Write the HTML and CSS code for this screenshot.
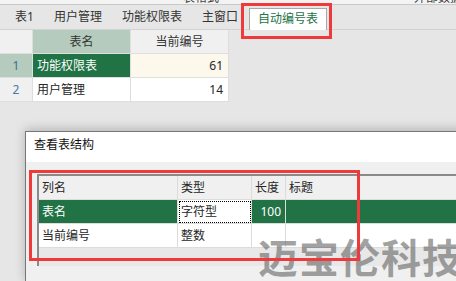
FILE: index.html
```html
<!DOCTYPE html>
<html lang="zh-CN">
<head>
    <meta charset="UTF-8">
    <title>自动编号表</title>
    <link rel="stylesheet" href="styles.css">
</head>
<body>
    <div class="title-strip">
        <span class="title-left">表格式</span>
        <span class="title-right">外部数据</span>
    </div>

    <div class="tab-bar">
        <div class="tab">表1</div>
        <div class="tab">用户管理</div>
        <div class="tab">功能权限表</div>
        <div class="tab">主窗口</div>
        <div class="tab active">自动编号表</div>
    </div>

    <div class="sheet">
        <div class="cell corner"></div>
        <div class="cell head sel-head">表名</div>
        <div class="cell head">当前编号</div>

        <div class="cell row-no sel-head">1</div>
        <div class="cell picked">功能权限表</div>
        <div class="cell num cream">61</div>

        <div class="cell row-no">2</div>
        <div class="cell">用户管理</div>
        <div class="cell num">14</div>
    </div>

    <div class="dialog">
        <div class="dialog-title">查看表结构</div>
        <div class="dialog-body">
            <div class="struct-grid">
                <div class="sc sh">列名</div>
                <div class="sc sh">类型</div>
                <div class="sc sh">长度</div>
                <div class="sc sh">标题</div>

                <div class="sc green">表名</div>
                <div class="sc focus">字符型</div>
                <div class="sc green right">100</div>
                <div class="sc green"></div>

                <div class="sc">当前编号</div>
                <div class="sc">整数</div>
                <div class="sc"></div>
                <div class="sc"></div>
            </div>
        </div>
    </div>

    <div class="watermark">迈宝伦科技</div>
    <div class="mark mark-tab"></div>
    <div class="mark mark-grid"></div>
</body>
</html>
```

FILE: styles.css
```css
body {
    margin: 0;
    width: 456px;
    height: 281px;
    overflow: hidden;
    position: relative;
    background: #e6e6e6;
    font-family: "Noto Sans", "Noto Sans CJK SC", sans-serif;
    font-size: 12px;
    color: #262626;
}

.title-strip {
    height: 4px;
    overflow: hidden;
    background: #f3f3f3;
    border-bottom: 1px solid #c9c9c9;
    display: flex;
    justify-content: space-between;
}
.title-strip span {
    line-height: 12px;
    margin-top: -8px;
    color: #444;
}
.title-left { margin-left: 183px; }
.title-right { margin-right: -6px; }

.tab-bar {
    height: 24px;
    display: flex;
    align-items: flex-end;
    padding-left: 5px;
    border-bottom: 1px solid #d2d2d2;
}
.tab {
    height: 24px;
    line-height: 24px;
    padding: 0 10px;
    color: #333;
}
.tab.active {
    height: 21px;
    line-height: 19px;
    margin-left: 1px;
    padding: 0 8px;
    background: #fff;
    border: 1px solid #a8a8a8;
    border-bottom: none;
    color: #217346;
    margin-bottom: -1px;
}

.sheet {
    display: grid;
    grid-template-columns: 33px 98px 98px;
    grid-auto-rows: 24px;
    width: 229px;
}
.cell {
    background: #fff;
    border-right: 1px solid #dedede;
    border-bottom: 1px solid #dedede;
    line-height: 23px;
    padding: 0 4px;
    white-space: nowrap;
}
.corner, .head, .row-no { background: #f0f0f0; }
.head { text-align: center; color: #333; }
.row-no { text-align: center; color: #4a78a3; }
.sel-head { background: #b5cbbe; }
.row-no.sel-head { color: #3f6e95; }
.picked { background: #217346; color: #fff; }
.num { text-align: right; padding-right: 5px; }
.cream { background: #fdf8ec; }

.dialog {
    position: absolute;
    left: 25px;
    top: 131px;
    width: 450px;
    height: 150px;
    border: 1px solid #767676;
    border-bottom: none;
    background: #f0f0f0;
    box-shadow: 0 -2px 10px rgba(0, 0, 0, 0.22);
}
.dialog-title {
    height: 30px;
    line-height: 26px;
    padding-left: 8px;
    background: #fff;
    color: #111;
}
.dialog-body {
    padding: 12px 0 0 11px;
}
.struct-grid {
    display: grid;
    grid-template-columns: 139px 74px 34px 180px;
    grid-auto-rows: 24px;
    height: 90px;
    border-top: 2px solid #8a8a8a;
    border-left: 2px solid #8a8a8a;
    background: #e8e8e8;
}
.sc {
    background: #fff;
    border-right: 1px solid #dcdcdc;
    border-bottom: 1px solid #dcdcdc;
    line-height: 24px;
    padding: 0 3px;
    white-space: nowrap;
}
.sh { background: #f0f0f0; }
.green { background: #217346; color: #fff; }
.right { text-align: right; padding-right: 4px; }
.focus {
    outline: 1px dotted #000;
    outline-offset: -2px;
}

.watermark {
    position: absolute;
    left: 258px;
    top: 238px;
    font-size: 40px;
    line-height: 1;
    font-weight: bold;
    letter-spacing: 1px;
    color: rgba(100, 100, 100, 0.6);
    white-space: nowrap;
}

.mark {
    position: absolute;
    border: 3px solid #ee3a3a;
    box-sizing: border-box;
}
.mark-tab {
    left: 241px;
    top: 3px;
    width: 91px;
    height: 36px;
}
.mark-grid {
    left: 29px;
    top: 170px;
    width: 331px;
    height: 91px;
}
```
